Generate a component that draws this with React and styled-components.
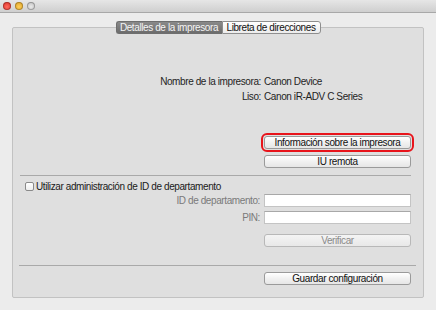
import React from 'react';
import styled, { createGlobalStyle, css } from 'styled-components';

const GlobalStyle = createGlobalStyle`
  html, body {
    margin: 0;
    padding: 0;
    background: #ececec;
  }
  body {
    font-family: "Liberation Sans", Arial, sans-serif;
    font-size: 10px;
    letter-spacing: -0.4px;
    color: #1e1e1e;
  }
`;

const Window = styled.div`
  width: 436px;
  height: 310px;
  background: #ececec;
  display: flex;
  flex-direction: column;
  overflow: hidden;
`;

const TitleBar = styled.div`
  height: 12px;
  background: linear-gradient(#e6e6e6, #cfcfcf);
  border-bottom: 1px solid #a8a8a8;
  display: flex;
  align-items: center;
  gap: 4px;
  padding-left: 3px;
`;

const Light = styled.span`
  width: 8px;
  height: 8px;
  border-radius: 50%;
  background: ${(p) => p.$color};
  box-shadow: inset 0 0 0 1px rgba(0, 0, 0, 0.25);
`;

const Body = styled.div`
  padding: 8px 12px 0 12px;
  display: flex;
  flex-direction: column;
`;

const Tabs = styled.div`
  display: flex;
  justify-content: center;
  position: relative;
  z-index: 1;
`;

const Tab = styled.div`
  height: 13px;
  line-height: 11px;
  box-sizing: border-box;
  border: 1px solid #8e8e8e;
  white-space: nowrap;
  text-align: center;
  ${(p) =>
    p.$active
      ? css`
          width: 106px;
          background: linear-gradient(#8a8a8a, #6c6c6c);
          color: #f4f4f4;
          border-radius: 3px 0 0 3px;
          border-right: none;
          border-color: #6e6e6e;
        `
      : css`
          width: 99px;
          background: linear-gradient(#ffffff, #ececec);
          color: #111;
          border-radius: 0 3px 3px 0;
        `}
`;

const Box = styled.div`
  margin-top: -7px;
  height: 271px;
  background: #dfdfdf;
  border: 1px solid #c2c2c2;
  border-radius: 2px;
  box-sizing: border-box;
  display: flex;
  flex-direction: column;
  padding: 0 12px 0 7px;
`;

const InfoGrid = styled.div`
  margin-top: 48px;
  display: grid;
  grid-template-columns: auto 147px;
  justify-content: end;
  column-gap: 3px;
  row-gap: 3px;
  line-height: 12px;
`;

const Label = styled.div`
  text-align: right;
  color: ${(p) => (p.$muted ? '#7a7a7a' : '#1e1e1e')};
`;

const Value = styled.div`
  color: #1e1e1e;
`;

const Button = styled.button`
  width: 147px;
  height: 13px;
  padding: 0;
  font-family: inherit;
  font-size: 10px;
  letter-spacing: inherit;
  line-height: 11px;
  border: 1px solid #9a9a9a;
  border-radius: 3px;
  background: linear-gradient(#ffffff, #f1f1f1 50%, #e6e6e6);
  color: ${(p) => (p.disabled ? '#8a8a8a' : '#111')};
  box-sizing: border-box;
  margin-top: ${(p) => p.$top || 0};
  ${(p) =>
    p.disabled &&
    css`
      border-color: #b8b8b8;
      background: linear-gradient(#f4f4f4, #e8e8e8);
    `}
  ${(p) =>
    p.$highlight &&
    css`
      outline: 2px solid #e8141b;
      outline-offset: 1px;
      border-radius: 3px;
    `}
`;

const ButtonColumn = styled.div`
  margin-top: 33px;
  display: flex;
  flex-direction: column;
  align-items: flex-end;
  gap: 6px;
`;

const Divider = styled.div`
  height: 1px;
  background: #a9a9a9;
  margin: ${(p) => p.$margin};
`;

const CheckRow = styled.label`
  display: flex;
  align-items: center;
  gap: 2px;
  margin: 5px 0 0 5px;
  color: #1a1a1a;
`;

const CheckBox = styled.span`
  width: 7px;
  height: 7px;
  border: 1px solid #8a8a8a;
  border-radius: 2px;
  background: linear-gradient(#ffffff, #eeeeee);
`;

const FormGrid = styled.div`
  margin-top: 2px;
  display: grid;
  grid-template-columns: auto 147px;
  justify-content: end;
  column-gap: 4px;
  row-gap: 4px;
  align-items: center;
`;

const Input = styled.div`
  width: 147px;
  height: 13px;
  box-sizing: border-box;
  background: #fff;
  border: 1px solid #c4c4c4;
  border-top-color: #a8a8a8;
`;

const Footer = styled.div`
  display: flex;
  justify-content: flex-end;
`;

const App = () => {
  return (
    <>
      <GlobalStyle />
      <Window>
        <TitleBar>
          <Light $color="radial-gradient(circle at 50% 60%, #ff6b5f, #d8261e)" />
          <Light $color="radial-gradient(circle at 50% 60%, #ffd05a, #d89a1c)" />
          <Light $color="radial-gradient(circle at 50% 60%, #eaeaea, #b8b8b8)" />
        </TitleBar>
        <Body>
          <Tabs>
            <Tab $active>Detalles de la impresora</Tab>
            <Tab>Libreta de direcciones</Tab>
          </Tabs>
          <Box>
            <InfoGrid>
              <Label>Nombre de la impresora:</Label>
              <Value>Canon Device</Value>
              <Label>Liso:</Label>
              <Value>Canon iR-ADV C Series</Value>
            </InfoGrid>
            <ButtonColumn>
              <Button $highlight>Información sobre la impresora</Button>
              <Button>IU remota</Button>
            </ButtonColumn>
            <Divider $margin="7px 0 0 0" />
            <CheckRow>
              <CheckBox />
              Utilizar administración de ID de departamento
            </CheckRow>
            <FormGrid>
              <Label $muted>ID de departamento:</Label>
              <Input />
              <Label $muted>PIN:</Label>
              <Input />
              <span />
              <Button disabled $top="6px">Verificar</Button>
            </FormGrid>
            <Divider $margin="18px -5px 6px -1px" />
            <Footer>
              <Button>Guardar configuración</Button>
            </Footer>
          </Box>
        </Body>
      </Window>
    </>
  );
};

export default App;
